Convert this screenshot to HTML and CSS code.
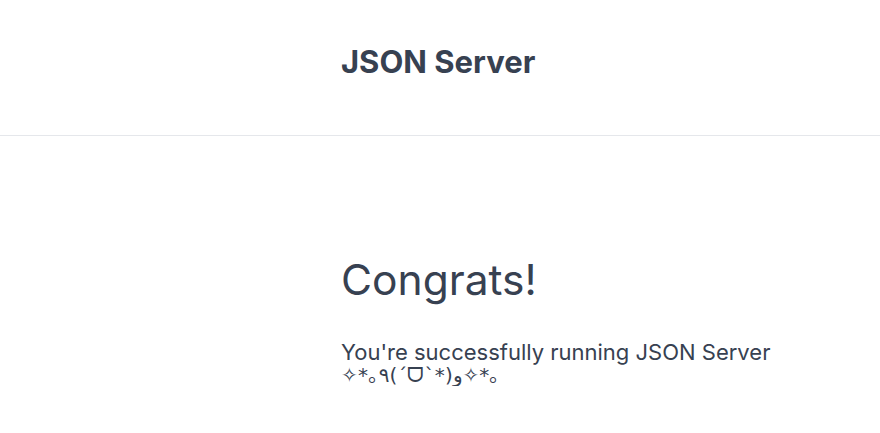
FILE: index.html
```html
<!DOCTYPE html>
<html lang="en">

<head>
    <meta charset="UTF-8">
    <meta name="viewport" content="width=device-width, initial-scale=1.0">
    <title>JSON Server</title>
    <link rel="stylesheet" href="styles.css">
</head>

<body>

    <header class="site-header">
        <div class="container">
            <strong class="brand">JSON Server</strong>
        </div>
    </header>

    <main class="container main">
        <h1>Congrats!</h1>
        <p class="lead">You're successfully running JSON Server <span class="kaomoji">✧*｡٩(ˊᗜˋ*)و✧*｡</span></p>
    </main>

</body>

</html>
```

FILE: styles.css
```css
body {
    font-family: Inter, "Liberation Sans", "DejaVu Sans", "Noto Sans CJK JP", sans-serif;
    color: #374151;
    background-color: #fff;
    margin: 0;
    padding: 0;
}

.container {
    max-width: 480px;
    margin-left: 341px;
}

.site-header {
    padding: 44px 0 55px;
    border-bottom: 1px solid #e5e7eb;
}

.brand {
    display: block;
    font-size: 31px;
    line-height: 36px;
    font-weight: 700;
}

.main {
    padding-top: 118px;
}

h1 {
    font-size: 42.5px;
    line-height: 52px;
    font-weight: 400;
    margin: 0 0 34px;
}

.lead {
    font-size: 22px;
    line-height: 24px;
    margin: 0;
}

.kaomoji {
    display: block;
    font-family: "DejaVu Sans", "Noto Sans CJK JP", sans-serif;
    font-size: 20px;
    line-height: 22px;
    letter-spacing: 0.3px;
}
```
